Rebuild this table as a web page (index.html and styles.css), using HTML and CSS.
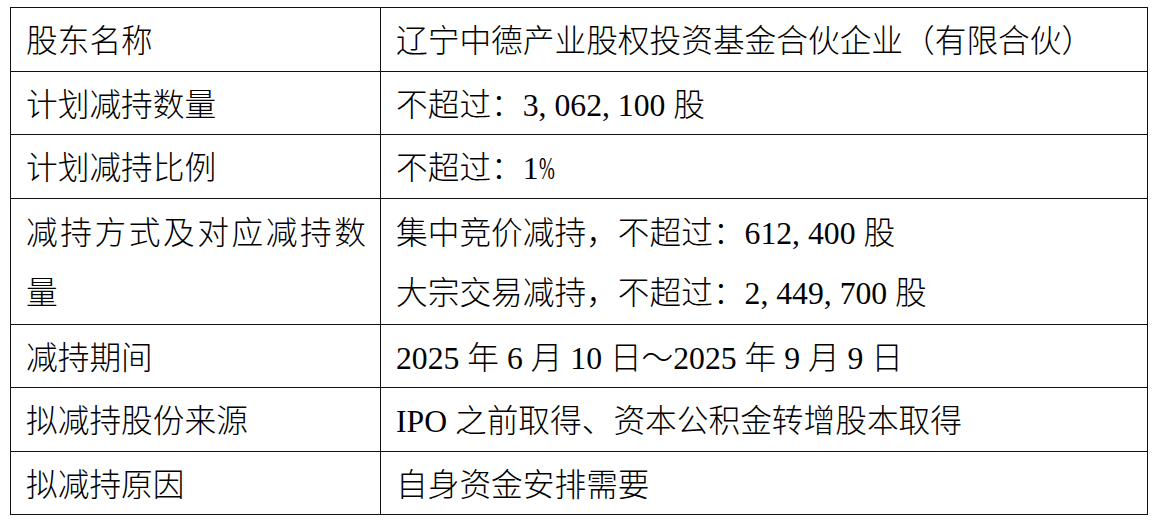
FILE: index.html
```html
<!DOCTYPE html>
<html lang="zh-CN">
<head>
<meta charset="utf-8">
<title>减持计划</title>
<link rel="stylesheet" href="styles.css">
</head>
<body>
<table class="plan">
  <colgroup><col class="c-label"><col class="c-value"></colgroup>
  <tbody>
    <tr><td class="label">股东名称</td><td class="value">辽宁中德产业股权投资基金合伙企业（有限合伙）</td></tr>
    <tr><td class="label">计划减持数量</td><td class="value">不超过：3<span class="cm">,</span>062<span class="cm">,</span>100 股</td></tr>
    <tr><td class="label">计划减持比例</td><td class="value">不超过：1<span class="pct">%</span></td></tr>
    <tr class="two"><td class="label justify">减持方式及对应减持数量</td><td class="value"><div>集中竞价减持，不超过：612<span class="cm">,</span>400 股</div><div>大宗交易减持，不超过：2<span class="cm">,</span>449<span class="cm">,</span>700 股</div></td></tr>
    <tr><td class="label">减持期间</td><td class="value">2025 年 6 月 10 日～2025 年 9 月 9 日</td></tr>
    <tr><td class="label">拟减持股份来源</td><td class="value">IPO 之前取得、资本公积金转增股本取得</td></tr>
    <tr><td class="label">拟减持原因</td><td class="value">自身资金安排需要</td></tr>
  </tbody>
</table>
</body>
</html>
```
FILE: styles.css
```css
html, body {
  background: #ffffff;
}
body {
  margin: 7px 0 0 10px;
  font-family: "Liberation Serif", "Noto Sans CJK SC", serif;
  font-size: 31.7px;
  font-weight: 300;
  color: #000000;
}
.plan {
  border-collapse: collapse;
  table-layout: fixed;
  width: 1137px;
}
.c-label { width: 370px; }
.c-value { width: 767px; }
.plan td {
  border: 1px solid #111111;
  padding: 5px 14px 0 15px;
  line-height: 57.5px;
  vertical-align: top;
  white-space: normal;
}
.plan tr.two td {
  line-height: 60px;
}
.label.justify {
  text-align: justify;
}
.cm {
  margin-right: 0.25em;
}
.pct {
  display: inline-block;
  width: 0.5em;
  transform: scaleX(0.6);
  transform-origin: left center;
}
```
